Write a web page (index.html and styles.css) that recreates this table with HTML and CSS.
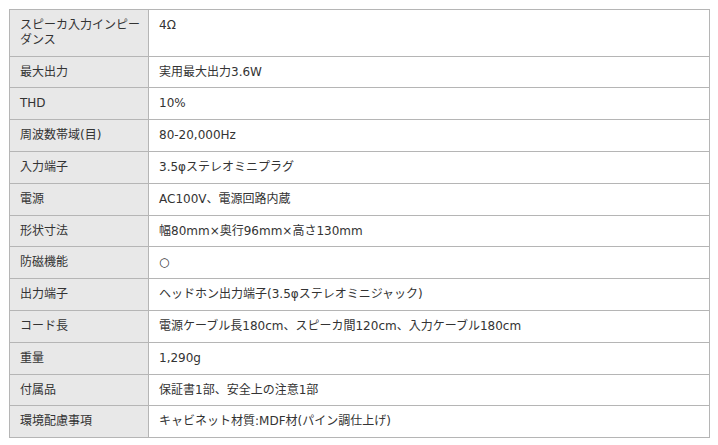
FILE: index.html
```html
<!DOCTYPE html>
<html lang="ja">
<head>
<meta charset="utf-8">
<link rel="stylesheet" href="styles.css">
</head>
<body>
<table class="spec">
  <tr><th>スピーカ入力インピーダンス</th><td>4Ω</td></tr>
  <tr><th>最大出力</th><td>実用最大出力3.6W</td></tr>
  <tr><th>THD</th><td>10%</td></tr>
  <tr><th>周波数帯域(目)</th><td>80-20,000Hz</td></tr>
  <tr><th>入力端子</th><td>3.5φステレオミニプラグ</td></tr>
  <tr><th>電源</th><td>AC100V、電源回路内蔵</td></tr>
  <tr><th>形状寸法</th><td>幅80mm×奥行96mm×高さ130mm</td></tr>
  <tr><th>防磁機能</th><td>○</td></tr>
  <tr><th>出力端子</th><td>ヘッドホン出力端子(3.5φステレオミニジャック)</td></tr>
  <tr><th>コード長</th><td>電源ケーブル長180cm、スピーカ間120cm、入力ケーブル180cm</td></tr>
  <tr><th>重量</th><td>1,290g</td></tr>
  <tr><th>付属品</th><td>保証書1部、安全上の注意1部</td></tr>
  <tr><th>環境配慮事項</th><td>キャビネット材質:MDF材(パイン調仕上げ)</td></tr>
</table>
</body>
</html>
```
FILE: styles.css
```css
html, body {
  margin: 0;
  padding: 0;
  background: #ffffff;
}
body {
  padding: 9px;
  font-family: "DejaVu Sans", "Noto Sans CJK JP", sans-serif;
  font-size: 12px;
  color: #333333;
}
.spec {
  border-collapse: collapse;
  width: 701px;
  table-layout: fixed;
}
.spec th,
.spec td {
  border: 1px solid #b5b5b5;
  padding: 8px 10px;
  line-height: 14.8px;
  text-align: left;
  vertical-align: top;
  font-weight: normal;
}
.spec th {
  width: 121px;
  padding-right: 7px;
  background: #e8e8e8;
  line-break: loose;
}
.spec td {
  background: #ffffff;
}
```
